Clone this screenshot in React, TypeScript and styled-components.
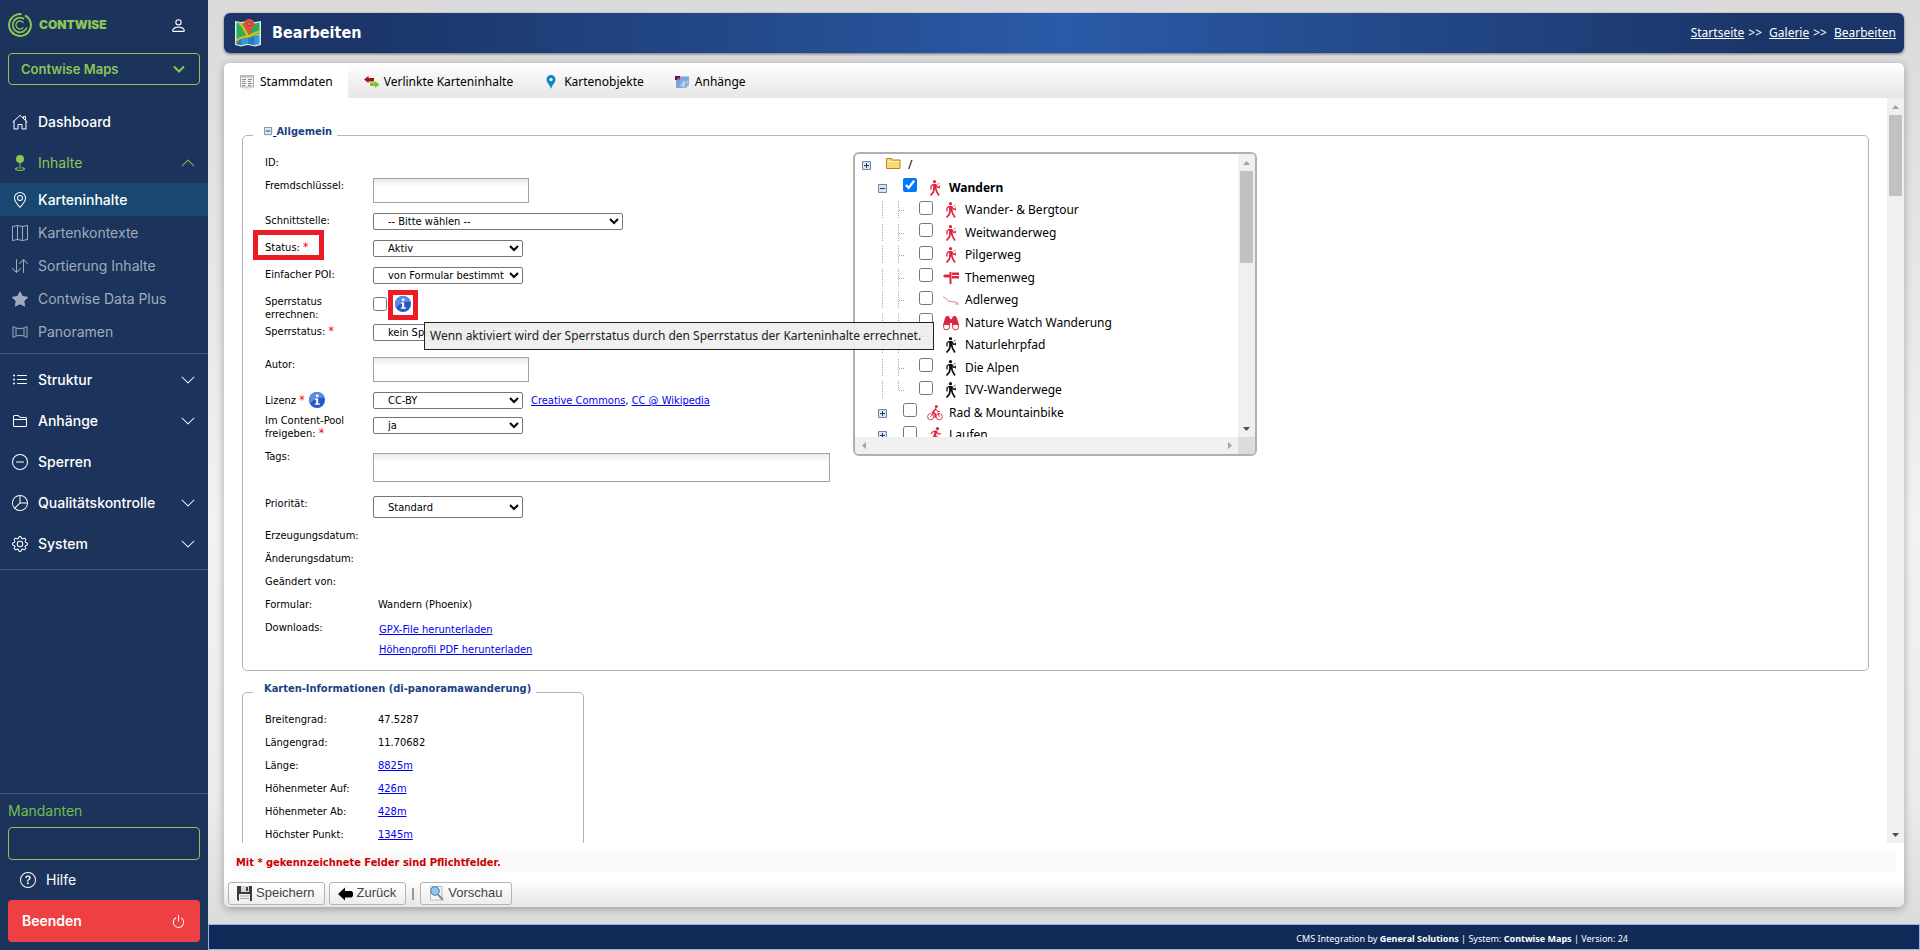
import React from "react";
import styled, { createGlobalStyle, css } from "styled-components";
import {
  BsArrowDownUp, BsChevronDown, BsChevronUp, BsDashCircle, BsFolder2, BsGear, BsGeoAlt,
  BsGeoFill, BsListUl, BsMap, BsPerson, BsPieChart, BsPower, BsQuestionCircle, BsStarFill,
} from "react-icons/bs";

const uiSmall = `"DejaVu Sans Condensed", "DejaVu Sans", sans-serif`;
const uiText = `"Noto Sans", sans-serif`;
const navText = `Inter, sans-serif`;

const GlobalStyle = createGlobalStyle`
  * { box-sizing: border-box; }
  body { margin: 0; font: 11px/13px ${uiSmall}; color: #000; }
  a { color: #0000ee; }
  svg { flex: none; }
`;

/* ---------- shell ---------- */

const Shell = styled.div`
  display: flex;
  height: 100vh;
`;

const Main = styled.main`
  flex: 1;
  min-width: 0;
  display: flex;
  flex-direction: column;
  background: linear-gradient(#dadada 0%, #f2f2f2 55%, #ececec 84%, #dcdcdc 97%);
`;

/* ---------- sidebar ---------- */

const Sidebar = styled.aside`
  width: 208px;
  flex: none;
  display: flex;
  flex-direction: column;
  background: #1c335b;
  color: #fff;
  font: 14px/20px ${navText};
`;

const Brand = styled.div`
  display: flex;
  align-items: center;
  gap: 7px;
  padding: 12px 21px 0 8px;
  height: 38px;
  color: #8cc657;
  font-size: 12px;
  font-weight: 900;
`;

const UserButton = styled.button`
  margin-left: auto;
  padding: 0;
  border: 0;
  background: none;
  color: #fff;
  display: flex;
`;

const ProductButton = styled.button`
  display: flex;
  align-items: center;
  justify-content: space-between;
  margin: 15px 8px 16px;
  height: 32px;
  padding: 0 14px 0 12px;
  border: 1px solid #8cc657;
  border-radius: 4px;
  background: none;
  color: #8cc657;
  font: 600 13px/20px ${navText};
`;

const NavList = styled.nav`
  display: flex;
  flex-direction: column;
  padding-bottom: 5px;
  border-bottom: 1px solid #3f5c80;
  & + & { padding-top: 5px; }
`;

const NavLink = styled.a<{ $sub?: boolean; $active?: boolean; $open?: boolean }>`
  display: flex;
  align-items: center;
  gap: 10px;
  height: ${p => (p.$sub ? 33 : 41)}px;
  padding: 0 12px;
  text-decoration: none;
  font-weight: ${p => (p.$sub || p.$open ? 400 : 500)};
  color: ${p => (p.$open ? "#8cc657" : p.$sub && !p.$active ? "#a0abbe" : "#fff")};
  ${p => p.$active && css`
    background: #184772;
    font-weight: 500;
  `}
  span { flex: 1; }
`;

const SidebarFoot = styled.div`
  margin-top: auto;
  border-top: 1px solid #3f5c80;
  padding: 7px 8px 8px;
  display: flex;
  flex-direction: column;
`;

const ClientLabel = styled.label`
  color: #6fbf52;
  line-height: 20px;
`;

const ClientInput = styled.input`
  width: 100%;
  height: 33px;
  margin-top: 6px;
  border: 1px solid #8cc657;
  border-radius: 4px;
  background: transparent;
  color: #fff;
`;

const HelpLink = styled.a`
  display: flex;
  align-items: center;
  gap: 10px;
  height: 40px;
  padding: 0 12px;
  color: #fff;
  text-decoration: none;
`;

const QuitButton = styled.button`
  display: flex;
  align-items: center;
  justify-content: space-between;
  height: 42px;
  padding: 0 14px;
  border: 0;
  border-radius: 4px;
  background: #ee4043;
  color: #fff;
  font: 600 14px/20px ${navText};
`;

/* ---------- title bar and panel ---------- */

const TitleBar = styled.header`
  display: flex;
  align-items: center;
  gap: 10px;
  height: 40px;
  margin: 13px 16px 10px;
  padding: 0 8px 0 10px;
  border-radius: 6px;
  background: linear-gradient(90deg, #1b3568 0%, #1b3568 8%, #2a5aa8 50%, #1b3568 92%, #1b3568 100%);
  box-shadow: 0 1px 3px rgba(0, 0, 0, 0.5);
  color: #fff;
`;

const Title = styled.h1`
  margin: 0;
  flex: 1;
  font: 700 16px/20px ${uiSmall};
`;

const Crumbs = styled.nav`
  display: flex;
  gap: 4px;
  font: 12px/16px ${uiText};
  a { color: #fff; }
  a + span + a { margin-left: 3px; }
`;

const Panel = styled.section`
  flex: 1;
  min-height: 0;
  display: flex;
  flex-direction: column;
  margin: 0 16px 17px;
  border-radius: 6px;
  background: #fff;
  box-shadow: 0 2px 8px rgba(0, 0, 0, 0.3);
`;

const Tabs = styled.div`
  flex: none;
  display: flex;
  height: 35px;
  border-radius: 6px 6px 0 0;
  background: linear-gradient(#fff, #e6e6e6);
`;

const Tab = styled.button<{ $active?: boolean }>`
  display: flex;
  align-items: center;
  gap: 4px;
  padding: 2px 15px 0 16px;
  border: 0;
  border-radius: 6px 0 0 0;
  background: ${p => (p.$active ? "#fff" : "none")};
  font: 12px/16px ${uiText};
  color: #000;
`;

const Scroller = styled.div`
  flex: 1;
  min-height: 0;
  display: flex;
`;

const Viewport = styled.div`
  flex: 1;
  min-width: 0;
  overflow: hidden;
`;

const FormPage = styled.form`
  display: flex;
  flex-direction: column;
  align-items: flex-start;
  gap: 10px;
  padding: 26px 18px 0;
`;

/* ---------- scroll bars ---------- */

const Track = styled.div<{ $row?: boolean }>`
  flex: none;
  display: flex;
  flex-direction: ${p => (p.$row ? "row" : "column")};
  justify-content: space-between;
  ${p => (p.$row ? "height" : "width")}: 17px;
  background: #f0f0f0;
`;

const Thumb = styled.div<{ $size: number }>`
  height: ${p => p.$size}px;
  margin: 0 2px auto;
  background: #c1c1c1;
`;

function Arrow({ dir, dim }: { dir: "up" | "down" | "left" | "right"; dim?: boolean }) {
  const d = {
    up: "M5 11h7L8.500 7z", down: "M5 7h7L8.500 11z", left: "M11 5v7L7 8.500z", right: "M7 5v7L11 8.500z",
  }[dir];
  return <svg width="17" height="17" aria-hidden="true"><path d={d} fill={dim ? "#a3a3a3" : "#505050"} /></svg>;
}

/* ---------- form ---------- */

const Group = styled.fieldset<{ $width?: number }>`
  width: ${p => (p.$width ? `${p.$width}px` : "100%")};
  min-width: 0;
  margin: 0;
  padding: 0 22px 10px;
  border: 1px solid #b3b3c8;
  border-radius: 5px;
`;

const Legend = styled.legend`
  margin-left: -12px;
  padding: 0 5px 7px 11px;
  font: 700 11px/15px ${uiSmall};
  color: #1b3f85;
  svg { vertical-align: -1px; }
`;

const Columns = styled.div`
  display: flex;
  gap: 23px;
`;

const Rows = styled.div`
  padding-top: 9px;
`;

const Row = styled.div<{ $h?: number }>`
  display: grid;
  grid-template-columns: 108px auto;
  align-items: start;
  min-height: ${p => p.$h ?? 23}px;
`;

const Label = styled.label`
  position: relative;
  padding: 1px 6px 0 0;
`;

const LabelWithInfo = styled.div`
  display: flex;
  align-items: center;
  gap: 4px;
`;

const Star = styled.span`
  color: #f00;
  font-size: 12px;
  line-height: 1;
`;

const Control = styled.div<{ $drop?: boolean; $wide?: boolean }>`
  display: flex;
  gap: 8px;
  align-items: center;
  width: ${p => (p.$wide ? "457px" : "auto")};
  padding-top: ${p => (p.$drop ? 4 : 0)}px;
`;

const Value = styled.div`
  padding: 1px 0 0 5px;
`;

const Downloads = styled.div`
  display: flex;
  flex-direction: column;
  padding-left: 6px;
  line-height: 20px;
`;

const TextInput = styled.input<{ $wide?: boolean }>`
  width: ${p => (p.$wide ? "100%" : "156px")};
  height: ${p => (p.$wide ? 29 : 25)}px;
  border: 1px solid #a3a3a3;
  background: linear-gradient(#e9eaea, #fff 8px);
  font: 11px/13px ${uiSmall};
`;

const Select = styled.select<{ $wide?: boolean; $tall?: boolean }>`
  width: ${p => (p.$wide ? 250 : 150)}px;
  height: ${p => (p.$tall ? 22 : 17)}px;
  padding: 0 0 0 10px;
  border: 1px solid #767676;
  border-radius: 2px;
  background: #fff;
  color: #000;
  font: 11px/13px ${uiSmall};
`;

const Check = styled.input`
  flex: none;
  width: 14px;
  height: 14px;
  margin: 0;
`;

const CheckControl = styled.div`
  position: relative;
  display: flex;
  align-items: center;
  gap: 8px;
  padding-top: 2px;
`;

const InfoButton = styled.button`
  padding: 0;
  border: 0;
  background: none;
  display: flex;
`;

const Marker = styled.span<{ $w: number }>`
  position: absolute;
  left: ${p => (p.$w > 30 ? -12 : 15)}px;
  top: ${p => (p.$w > 30 ? -10 : -4)}px;
  width: ${p => p.$w}px;
  height: 30px;
  border: 5px solid #ed1c24;
`;

const Tooltip = styled.div`
  position: absolute;
  z-index: 2;
  left: 51px;
  top: 28px;
  padding: 5px 12px 5px 5px;
  border: 1px solid #222;
  background: rgba(238, 238, 238, 0.95);
  font: 12px/16px ${uiText};
  color: #222;
  white-space: nowrap;
`;

/* ---------- category tree ---------- */

const TreeBox = styled.div`
  flex: none;
  align-self: flex-start;
  display: flex;
  flex-direction: column;
  width: 404px;
  height: 304px;
  margin-top: 6px;
  border: 2px solid #b0b0b0;
  border-radius: 6px;
  overflow: hidden;
`;

const TreeBody = styled.div`
  flex: 1;
  min-height: 0;
  display: flex;
`;

const TreeList = styled.ul`
  flex: 1;
  margin: 0;
  padding: 0 0 0 4px;
  list-style: none;
  overflow: hidden;
`;

const TreeItem = styled.li`
  display: flex;
  align-items: center;
  height: 22px;
  font: 12px/16px ${uiText};
  &:nth-child(even) { height: 23px; }
`;

const Indent = styled.span`
  width: 16px;
  flex: none;
`;

const TreeLabel = styled.label<{ $bold?: boolean }>`
  display: flex;
  align-items: center;
  font-weight: ${p => (p.$bold ? 700 : 400)};
  input { margin: 0 10px 5px 12px; }
  svg { margin-right: 6px; }
`;

const RootLabel = styled.span`
  display: flex;
  align-items: center;
  gap: 7px;
  padding-left: 11px;
`;

const CornerRow = styled.div`
  display: grid;
  padding-right: 17px;
  background: #dcdcdc;
`;

/* ---------- panel foot, page foot ---------- */

const Note = styled.p`
  margin: 8px 8px 0;
  padding: 5px 4px 3px;
  background: #f9f9f9;
  color: #c00;
  font: 700 11px/13px ${uiSmall};
`;

const Actions = styled.div`
  display: flex;
  align-items: center;
  gap: 4px;
  padding: 10px 4px 2px;
  border-radius: 0 0 6px 6px;
  background: linear-gradient(#fff 20%, #e6e6e6);
`;

const ActionButton = styled.button`
  display: flex;
  align-items: center;
  gap: 4px;
  height: 23px;
  padding: 0 9px 2px 8px;
  border: 1px solid #b3b3b3;
  border-radius: 3px;
  background: linear-gradient(#fff, #ededed);
  color: #444;
  font: 13px/16px "Liberation Sans", Arial, sans-serif;
`;

const Divider = styled.span`
  width: 2px;
  height: 12px;
  margin: 0 2px;
  background: #999;
`;

const PageFoot = styled.footer`
  flex: none;
  display: flex;
  align-items: center;
  justify-content: flex-end;
  height: 26px;
  padding: 4px 17% 0 0;
  border: 1px solid #8fb4ec;
  background: #122a57;
  color: #fff;
  font: 9px/12px ${uiText};
  white-space: pre;
`;

/* ---------- drawings ---------- */

const LogoMark = () => (
  <svg width="24" height="24" viewBox="0 0 24 24" fill="none" stroke="#8cc657">
    <circle cx="12" cy="12" r="10.900" strokeWidth="2" strokeDasharray="56 3.500 9" transform="rotate(-18 12 12)" />
    <circle cx="12" cy="12" r="7.300" strokeWidth="1.700" strokeDasharray="36 9.900" transform="rotate(20 12 12)" />
    <circle cx="12" cy="12" r="4" strokeWidth="1.400" strokeDasharray="20 5.100" transform="rotate(35 12 12)" />
  </svg>
);

const HouseIcon = () => (
  <svg width="16" height="16" viewBox="0 0 16 16" fill="none" stroke="currentColor" strokeLinejoin="round" strokeLinecap="round">
    <path d="M1 8l7-6.700L15 8M2 7v8h4v-4.500h4V15h4V7M11.500 4V2.500h2V6" />
  </svg>
);

const BoldChevron = () => (
  <svg width="12" height="12" viewBox="0 0 12 12" fill="none" stroke="currentColor" strokeWidth="2">
    <path d="M1 3.500l5 5 5-5" />
  </svg>
);

const PanoramaIcon = () => (
  <svg width="16" height="16" viewBox="0 0 16 16" fill="none" stroke="currentColor">
    <path d="M1 2.500c1 .2 2.300.7 3 1.500 2.500.6 5.500.6 8 0 .7-.8 2-1.300 3-1.500v11c-1-.2-2.300-.7-3-1.500-2.500-.6-5.500-.6-8 0-.7.800-2 1.300-3 1.500zM4 4v8M12 4v8" />
  </svg>
);

const MapLogo = () => (
  <svg width="28" height="32" viewBox="0 0 28 32">
    <path d="M1 4l6 1 7-1 7 1 6-1v24l-6 1.500L14 28l-7 1.500L1 28z" fill="#dfe6e2" />
    <path d="M2.500 5.500l5 1 6.500-1 6.500 1 5-1V17L2.500 22z" fill="#27ae60" />
    <path d="M2.500 23L14 19l11.500-1v9l-5 1.200-6.500-1.400-6.500 1.400-5-1.200z" fill="#3498db" />
    <path d="M2.500 23L7.500 21v7.200l-5-1.200zM14 19l6.500-.6v9.800L14 26.800z" fill="#2980b9" />
    <path d="M2.500 24C7 18 13 21 17 18.500s5-3 8.500-4M5 6c4 2 5 7 9 13.500" fill="none" stroke="#f5b50a" strokeWidth="2.200" />
    <path d="M15 18c-1-4-5-7-5-11a5.200 5.200 0 0 1 10.400 0c0 4-4.400 7-5.400 11z" fill="#e74c3c" />
    <circle cx="15.200" cy="7" r="1.700" fill="#7fb09a" stroke="#b0352a" />
  </svg>
);

const FormIcon = () => (
  <svg width="16" height="16" viewBox="0 0 16 16">
    <path d="M.5 1.500h13v11.500H.5z" fill="#f4f4f4" stroke="#a8a8a8" />
    <path d="M0 1h14v2.500H0z" fill="#bcbcbc" />
    <path d="M2 5.500h4M2 7.500h3.500M2 9.500h4M2 11.500h3M8 5.500h4M8 7.500h3M8 9.500h4M8 11.500h3" stroke="#8a8a8a" />
    <path d="M3 15h8" stroke="#ddd" />
  </svg>
);

const LinkIcon = () => (
  <svg width="16" height="16" viewBox="0 0 16 16">
    <path d="M0 5.500L4.500 2v2H10v3.500H4.500V9z" fill="#a31515" />
    <path d="M15.500 10.500L11 14v-2H6V8.500h5V7z" fill="#7ac52a" />
  </svg>
);

const PinIcon = () => (
  <svg width="16" height="16" viewBox="0 0 16 16">
    <path d="M7 15C6 11 2.500 8.500 2.500 5.500a4.500 4.500 0 0 1 9 0C11.500 8.500 8 11 7 15z" fill="#0e86c8" />
    <circle cx="7" cy="5.500" r="1.600" fill="#fff" />
  </svg>
);

const AttachIcon = () => (
  <svg width="16" height="16" viewBox="0 0 16 16">
    <path d="M1 2.500h13V11l-3 3H1z" fill="#7ba7e0" />
    <path d="M0 2h5v4H0z" fill="#3a2150" />
    <circle cx="3.500" cy="5" r="1.600" fill="#e0407a" />
    <path d="M5 12l4-6 2 3 2-3 1 5-3 3z" fill="#b9cde8" />
    <path d="M10 14l4-4v-1l-4 1z" fill="#9aa3ad" />
  </svg>
);

const InfoIcon = () => (
  <svg width="16" height="16" viewBox="0 0 16 16">
    <circle cx="8" cy="8" r="8" fill="#2458c8" />
    <path d="M8 0a8 8 0 0 1 7.500 6C11 5 5 7 1 11.500A8 8 0 0 1 8 0z" fill="#5b8ce4" />
    <circle cx="8.200" cy="3.800" r="1.400" fill="#fff" />
    <path d="M6 6.500h3.200v5H11v1.200H5.800v-1.200h1.300V7.700H6z" fill="#fff" />
  </svg>
);

const Expander = ({ open, size = 16 }: { open?: boolean; size?: number }) => (
  <svg width={size} height={size} viewBox={size === 16 ? "0 -1 16 16" : "3 3 10 10"}>
    <path d="M3.500 3.500h8v8h-8z" fill="#dbe4f0" stroke="#6d84a6" />
    <path d={open ? "M5 7.500h5" : "M5 7.500h5M7.500 5v5"} stroke="#1f3864" />
  </svg>
);

const TreeLine = ({ tick, end }: { tick?: boolean; end?: boolean }) => (
  <svg width="16" height="18" viewBox="0 0 16 18" fill="none" stroke="#aaa" strokeDasharray="1 1">
    <path d={`M7.500 0V${end ? 10 : 18}${tick ? "M8 9.500h6" : ""}`} />
  </svg>
);

const FolderIcon = () => (
  <svg width="15" height="16" viewBox="0 0 15 16">
    <path d="M.5 11.500v-10h5l1 1.500h7.500v8.500z" fill="#fbd96b" stroke="#a8842a" />
    <path d="M1 4.500h12.500" stroke="#fff3c0" />
  </svg>
);

const HikerIcon = ({ color = "#111" }: { color?: string }) => (
  <svg width="16" height="16" viewBox="0 0 16 16" fill="none" stroke={color}>
    <circle cx="7.500" cy="1.700" r="1.600" fill={color} stroke="none" />
    <path d="M6 4h3l.8 5.500H6.200z" fill={color} stroke="none" />
    <path d="M6.300 4.300L4 6v3.500M8.800 4.500l1.500 2.700L12.500 7" strokeWidth="1.300" />
    <path d="M7 9l-.6 3L3.500 15.500M8.800 9l.9 2.700 2.300 3.800" strokeWidth="1.700" />
    <path d="M10.500 4.500l2-1.500M12.500 5.500v3" strokeWidth=".8" />
  </svg>
);

const BikerIcon = () => (
  <svg width="16" height="16" viewBox="0 0 16 16" fill="none" stroke="#df2540">
    <circle cx="3.700" cy="11.700" r="3.100" strokeWidth=".9" />
    <circle cx="12.300" cy="11.700" r="3.100" strokeWidth=".9" />
    <circle cx="9.300" cy="1.500" r="1.500" fill="#df2540" stroke="none" />
    <path d="M9 3.500L5.800 7.500l2.700 1.700-.5 3.500" strokeWidth="1.800" />
    <path d="M9.300 4.300l1.500 2.200h2M3.700 11.700l3-3.500M11 7.500l1.300 4.200" />
  </svg>
);

const RunnerIcon = () => (
  <svg width="16" height="16" viewBox="0 0 16 16" fill="none" stroke="#df2540">
    <circle cx="10.500" cy="1.700" r="1.600" fill="#df2540" stroke="none" />
    <path d="M9.500 3.800L7.500 8.700" strokeWidth="2.600" />
    <path d="M9 4.200L5.300 5 4 7M10 5l1.500 2 2.500-.5" strokeWidth="1.200" />
    <path d="M7.500 8.500l3 2-.5 4.500M7.300 9l-2.500 3H1" strokeWidth="1.700" />
  </svg>
);

const BinocularsIcon = () => (
  <svg width="16" height="16" viewBox="0 0 16 16" fill="#df2540">
    <path d="M2 3l1.500-2h2L7 3v7H0zM14 3l-1.500-2h-2L9 3v7h7zM7 4h2v4H7z" />
    <path d="M.7 9.500h5.600v3a2.800 2.300 0 0 1-5.600 0zM9.700 9.500h5.600v3a2.800 2.300 0 0 1-5.600 0z" fill="#fff" stroke="#df2540" />
  </svg>
);

const SignIcon = () => (
  <svg width="16" height="16" viewBox="0 0 16 16" fill="#df2540">
    <path d="M0 6l1.500-1.500H6.500V2h2v12h-2V7.500H1.500zM9 2.500h7v2.500H9zM9 6h7v2.500H9z" />
  </svg>
);

const EagleTrailIcon = () => (
  <svg width="16" height="16" viewBox="0 0 16 16" fill="none" stroke="#e8808e">
    <path d="M0 5c3 .5 4 4 7 4.500s5 0 8 1.500M12 12h4" />
  </svg>
);

const DiskIcon = () => (
  <svg width="15" height="16" viewBox="0 0 15 16">
    <path d="M0 1h15v15H1.500L0 14.500z" fill="#3b3b3b" />
    <path d="M4 1h8v6H4z" fill="#d9d9d9" />
    <path d="M9 2h2v4H9z" fill="#444" />
    <path d="M2 9h11v7H2z" fill="#f0f0f0" />
    <path d="M3 11h9M3 13.500h9" stroke="#aaa" />
  </svg>
);

const BackIcon = () => (
  <svg width="15" height="16" viewBox="0 0 15 16"><path d="M0 9l7-6.500V6h6.500L15 7.500V11l-1.500 1.500H7v3z" fill="#000" /></svg>
);

const PreviewIcon = () => (
  <svg width="15" height="16" viewBox="0 0 15 16">
    <path d="M1.500 1.500H13V15H1.500z" fill="#f7f7f7" stroke="#bbb" />
    <circle cx="6" cy="6" r="4.300" fill="#8cc8ee" stroke="#4a7fae" />
    <path d="M9 9.500l5 5.500" stroke="#8a8a8a" strokeWidth="2" />
  </svg>
);

/* ---------- data ---------- */

const content = [
  { text: "Karteninhalte", icon: <BsGeoAlt size={16} />, active: true },
  { text: "Kartenkontexte", icon: <BsMap size={16} /> },
  { text: "Sortierung Inhalte", icon: <BsArrowDownUp size={16} /> },
  { text: "Contwise Data Plus", icon: <BsStarFill size={16} /> },
  { text: "Panoramen", icon: <PanoramaIcon /> },
];

const sections = [
  { text: "Struktur", icon: <BsListUl size={16} />, more: true },
  { text: "Anhänge", icon: <BsFolder2 size={16} />, more: true },
  { text: "Sperren", icon: <BsDashCircle size={16} /> },
  { text: "Qualitätskontrolle", icon: <BsPieChart size={16} />, more: true },
  { text: "System", icon: <BsGear size={16} />, more: true },
];

const red = "#df2540";
const trails = [
  { text: "Wander- & Bergtour", icon: <HikerIcon color={red} /> },
  { text: "Weitwanderweg", icon: <HikerIcon color={red} /> },
  { text: "Pilgerweg", icon: <HikerIcon color={red} /> },
  { text: "Themenweg", icon: <SignIcon /> },
  { text: "Adlerweg", icon: <EagleTrailIcon /> },
  { text: "Nature Watch Wanderung", icon: <BinocularsIcon /> },
  { text: "Naturlehrpfad", icon: <HikerIcon /> },
  { text: "Die Alpen", icon: <HikerIcon /> },
  { text: "IVV-Wanderwege", icon: <HikerIcon /> },
];

const facts = [
  ["Breitengrad:", "47.5287"], ["Längengrad:", "11.70682"], ["Länge:", "8825m"],
  ["Höhenmeter Auf:", "426m"], ["Höhenmeter Ab:", "428m"], ["Höchster Punkt:", "1345m"],
];

/* ---------- parts ---------- */

function SideNav() {
  return (
    <Sidebar>
      <Brand>
        <LogoMark />
        CONTWISE
        <UserButton type="button" aria-label="Benutzer"><BsPerson size={17} /></UserButton>
      </Brand>
      <ProductButton type="button">Contwise Maps <BoldChevron /></ProductButton>
      <NavList>
        <NavLink href="#dashboard"><HouseIcon /><span>Dashboard</span></NavLink>
        <NavLink href="#inhalte" $open><BsGeoFill size={16} /><span>Inhalte</span><BsChevronUp size={16} /></NavLink>
        {content.map(c => (
          <NavLink key={c.text} href="#inhalte" $sub $active={c.active}>{c.icon}<span>{c.text}</span></NavLink>
        ))}
      </NavList>
      <NavList>
        {sections.map(s => (
          <NavLink key={s.text} href="#bereich">{s.icon}<span>{s.text}</span>{s.more && <BsChevronDown size={16} />}</NavLink>
        ))}
      </NavList>
      <SidebarFoot>
        <ClientLabel htmlFor="client">Mandanten</ClientLabel>
        <ClientInput id="client" />
        <HelpLink href="#hilfe"><BsQuestionCircle size={16} />Hilfe</HelpLink>
        <QuitButton type="button">Beenden <BsPower size={15} /></QuitButton>
      </SidebarFoot>
    </Sidebar>
  );
}

function CategoryTree() {
  return (
    <TreeBox>
      <TreeBody>
        <TreeList>
          <TreeItem><Expander /><RootLabel><FolderIcon />/</RootLabel></TreeItem>
          <TreeItem>
            <Indent /><Expander open />
            <TreeLabel $bold><Check type="checkbox" defaultChecked /><HikerIcon color={red} />Wandern</TreeLabel>
          </TreeItem>
          {trails.map((t, i) => (
            <TreeItem key={t.text}>
              <Indent /><TreeLine /><TreeLine tick end={i === trails.length - 1} />
              <TreeLabel><Check type="checkbox" />{t.icon}{t.text}</TreeLabel>
            </TreeItem>
          ))}
          <TreeItem>
            <Indent /><Expander />
            <TreeLabel><Check type="checkbox" /><BikerIcon />Rad &amp; Mountainbike</TreeLabel>
          </TreeItem>
          <TreeItem>
            <Indent /><Expander />
            <TreeLabel><Check type="checkbox" /><RunnerIcon />Laufen</TreeLabel>
          </TreeItem>
        </TreeList>
        <Track><Arrow dir="up" dim /><Thumb $size={92} /><Arrow dir="down" /></Track>
      </TreeBody>
      <CornerRow>
        <Track $row><Arrow dir="left" dim /><Arrow dir="right" dim /></Track>
      </CornerRow>
    </TreeBox>
  );
}

function GeneralGroup() {
  return (
    <Group>
      <Legend><a href="#allgemein" aria-label="Einklappen"><Expander open size={9} />&nbsp;</a>Allgemein</Legend>
      <Columns>
        <Rows>
          <Row><Label as="span">ID:</Label></Row>
          <Row $h={35}>
            <Label htmlFor="key">Fremdschlüssel:</Label>
            <Control><TextInput id="key" /></Control>
          </Row>
          <Row $h={27}>
            <Label htmlFor="iface">Schnittstelle:</Label>
            <Control><Select id="iface" $wide><option>-- Bitte wählen --</option></Select></Control>
          </Row>
          <Row $h={27}>
            <Label htmlFor="status">Status: <Star>*</Star><Marker $w={71} /></Label>
            <Control><Select id="status"><option>Aktiv</option></Select></Control>
          </Row>
          <Row $h={27}>
            <Label htmlFor="poi">Einfacher POI:</Label>
            <Control><Select id="poi"><option>von Formular bestimmt</option></Select></Control>
          </Row>
          <Row $h={30}>
            <Label htmlFor="calc">Sperrstatus errechnen:</Label>
            <CheckControl>
              <Check type="checkbox" id="calc" aria-describedby="calc-tip" />
              <InfoButton type="button" aria-label="Info"><InfoIcon /></InfoButton>
              <Marker $w={30} />
              <Tooltip role="tooltip" id="calc-tip">
                Wenn aktiviert wird der Sperrstatus durch den Sperrstatus der Karteninhalte errechnet.
              </Tooltip>
            </CheckControl>
          </Row>
          <Row $h={33}>
            <Label htmlFor="lock">Sperrstatus: <Star>*</Star></Label>
            <Control><Select id="lock"><option>kein Sperrstatus</option></Select></Control>
          </Row>
          <Row $h={35}>
            <Label htmlFor="author">Autor:</Label>
            <Control><TextInput id="author" /></Control>
          </Row>
          <Row $h={21}>
            <LabelWithInfo>
              <label htmlFor="licence">Lizenz <Star>*</Star></label>
              <InfoButton type="button" aria-label="Info"><InfoIcon /></InfoButton>
            </LabelWithInfo>
            <Control>
              <Select id="licence"><option>CC-BY</option></Select>
              <span><a href="#cc">Creative Commons</a>, <a href="#wiki">CC @ Wikipedia</a></span>
            </Control>
          </Row>
          <Row $h={36}>
            <Label htmlFor="pool">Im Content-Pool freigeben: <Star>*</Star></Label>
            <Control $drop><Select id="pool"><option>ja</option></Select></Control>
          </Row>
          <Row $h={47}>
            <Label htmlFor="tags">Tags:</Label>
            <Control $drop $wide><TextInput id="tags" $wide /></Control>
          </Row>
          <Row $h={32}>
            <Label htmlFor="prio">Priorität:</Label>
            <Control><Select id="prio" $tall><option>Standard</option></Select></Control>
          </Row>
          <Row><Label as="span">Erzeugungsdatum:</Label></Row>
          <Row><Label as="span">Änderungsdatum:</Label></Row>
          <Row><Label as="span">Geändert von:</Label></Row>
          <Row><Label as="span">Formular:</Label><Value>Wandern (Phoenix)</Value></Row>
          <Row>
            <Label as="span">Downloads:</Label>
            <Downloads>
              <a href="#gpx">GPX-File herunterladen</a>
              <a href="#pdf">Höhenprofil PDF herunterladen</a>
            </Downloads>
          </Row>
        </Rows>
        <CategoryTree />
      </Columns>
    </Group>
  );
}

export default function App() {
  return (
    <Shell>
      <GlobalStyle />
      <SideNav />
      <Main>
        <TitleBar>
          <MapLogo />
          <Title>Bearbeiten</Title>
          <Crumbs>
            <a href="#start">Startseite</a><span>&gt;&gt;</span>
            <a href="#galerie">Galerie</a><span>&gt;&gt;</span>
            <a href="#bearbeiten">Bearbeiten</a>
          </Crumbs>
        </TitleBar>
        <Panel>
          <Tabs>
            <Tab type="button" $active><FormIcon />Stammdaten</Tab>
            <Tab type="button"><LinkIcon />Verlinkte Karteninhalte</Tab>
            <Tab type="button"><PinIcon />Kartenobjekte</Tab>
            <Tab type="button"><AttachIcon />Anhänge</Tab>
          </Tabs>
          <Scroller>
            <Viewport>
              <FormPage>
                <GeneralGroup />
                <Group $width={342}>
                  <Legend>Karten-Informationen (di-panoramawanderung)</Legend>
                  <Rows>
                    {facts.map(([name, value]) => (
                      <Row key={name}>
                        <Label as="span">{name}</Label>
                        <Value>{value.endsWith("m") ? <a href="#profil">{value}</a> : value}</Value>
                      </Row>
                    ))}
                  </Rows>
                </Group>
              </FormPage>
            </Viewport>
            <Track><Arrow dir="up" dim /><Thumb $size={81} /><Arrow dir="down" /></Track>
          </Scroller>
          <Note>Mit * gekennzeichnete Felder sind Pflichtfelder.</Note>
          <Actions>
            <ActionButton type="button"><DiskIcon />Speichern</ActionButton>
            <ActionButton type="button"><BackIcon />Zurück</ActionButton>
            <Divider />
            <ActionButton type="button"><PreviewIcon />Vorschau</ActionButton>
          </Actions>
        </Panel>
        <PageFoot>CMS Integration by <b>General Solutions</b> | System: <b>Contwise Maps</b> | Version: 24</PageFoot>
      </Main>
    </Shell>
  );
}
